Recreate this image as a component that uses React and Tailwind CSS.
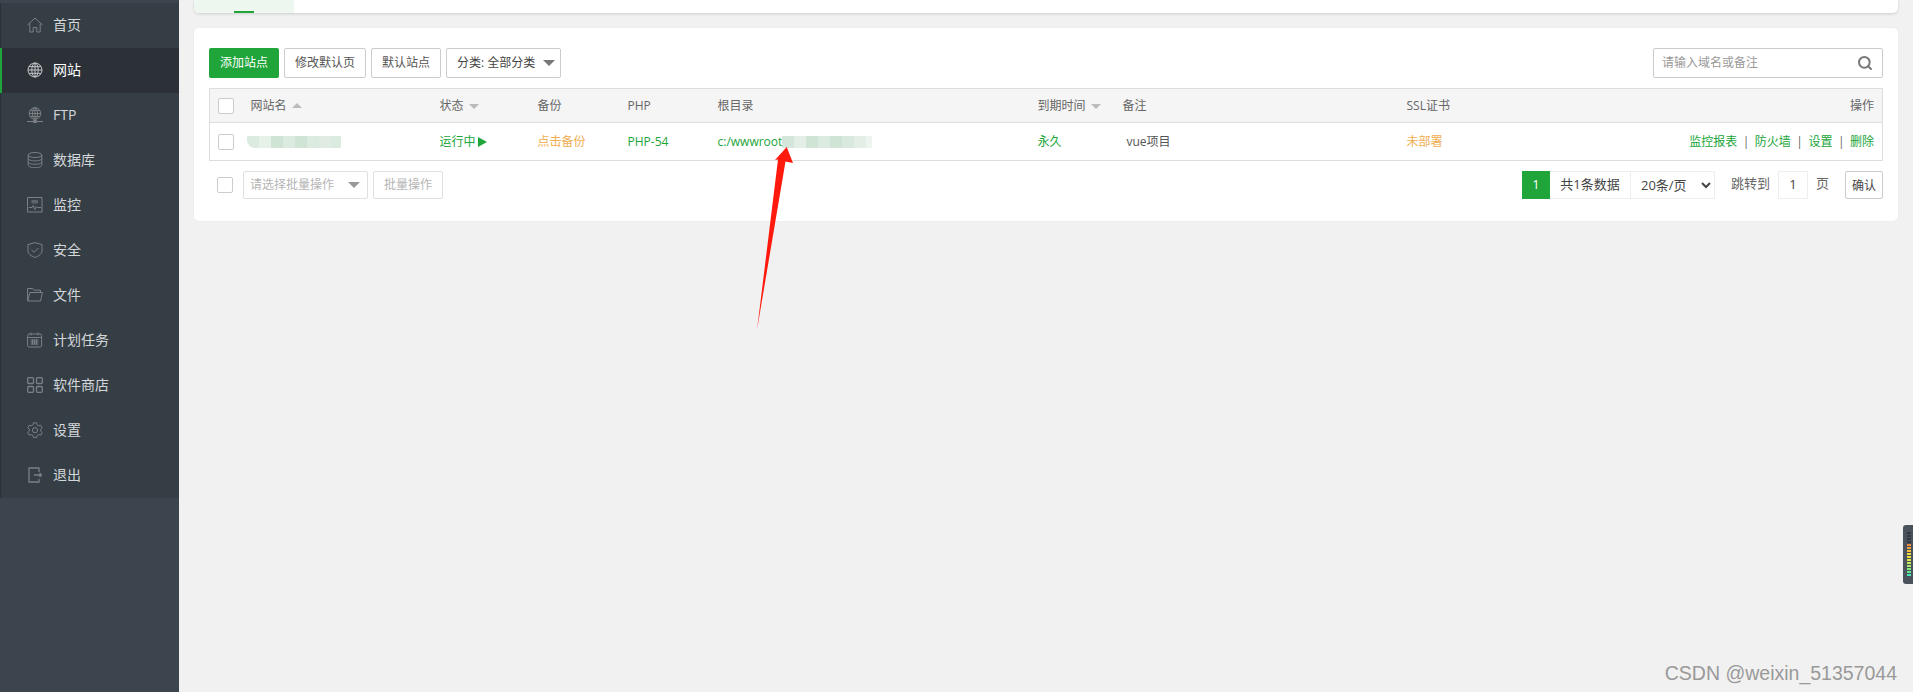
import { Search } from "lucide-react";

const icon = "w-4 h-4 shrink-0 fill-none stroke-[#7b8085]";

const navItems = [
  {
    label: "首页",
    icon: (
      <svg viewBox="0 0 16 16" className={icon}>
        <path d="M.5 8 8 1l7.5 7M2.8 6.5v8.5h3.4v-4.5h3.6V15h3.4V6.5" />
      </svg>
    ),
  },
  {
    label: "网站",
    active: true,
    icon: (
      <svg viewBox="0 0 16 16" className="w-4 h-4 shrink-0 fill-none stroke-[#c4c7ca]">
        <circle cx="8" cy="8" r="7" />
        <ellipse cx="8" cy="8" rx="3.2" ry="7" />
        <path d="M8 1v14M1 8h14M2 4.7h12M2 11.3h12" />
      </svg>
    ),
  },
  {
    label: "FTP",
    icon: (
      <svg viewBox="0 0 16 16" className={icon}>
        <circle cx="8" cy="6.5" r="5.8" />
        <ellipse cx="8" cy="6.5" rx="2.6" ry="5.8" />
        <path d="M2.2 6.5h11.6M3 3.6h10M3 9.4h10M8 .7v13M0 14.5h16" />
        <path d="M6.5 13.5h3v2h-3z" fill="#7b8085" />
      </svg>
    ),
  },
  {
    label: "数据库",
    icon: (
      <svg viewBox="0 0 16 16" className={icon}>
        <ellipse cx="8" cy="3" rx="6.8" ry="2.5" />
        <path d="M1.2 3v10.2c0 1.4 3 2.5 6.8 2.5s6.8-1.1 6.8-2.5V3" />
        <path d="M1.2 6.4c0 1.4 3 2.5 6.8 2.5s6.8-1.1 6.8-2.5M1.2 9.8c0 1.4 3 2.5 6.8 2.5s6.8-1.1 6.8-2.5" />
      </svg>
    ),
  },
  {
    label: "监控",
    icon: (
      <svg viewBox="0 0 16 16" className={icon}>
        <path d="M.5.5H15V15H.5z" />
        <path d="M4.5 3H11v3.5H4.5z" fill="#5f656b" stroke="none" />
        <path d="M2 10.5h3l1.2-2 1.600 4 1.400-3 1 1H14" />
      </svg>
    ),
  },
  {
    label: "安全",
    icon: (
      <svg viewBox="0 0 16 16" className={icon}>
        <path d="M8 .6 1 2.6v6.2c0 3 3 5.300 7 6.700 4-1.400 7-3.700 7-6.700V2.600z" />
        <path d="m4.500 7.800 2.600 2.500 4.300-4.300" />
      </svg>
    ),
  },
  {
    label: "文件",
    icon: (
      <svg viewBox="0 0 16 16" className={icon}>
        <path d="M.6 14V1.500h5.200l1.400 1.700h6.300v2.300" />
        <path d="M.6 14 3 5.500h12.500L13.500 14z" />
      </svg>
    ),
  },
  {
    label: "计划任务",
    icon: (
      <svg viewBox="0 0 16 16" className={icon}>
        <rect x=".6" y="2" width="14" height="13" rx="1.5" />
        <path d="M.6 5.500h14M4 .5v3M11 .5v3M3.500 8h8M3.500 10h8M3.500 12h8M5.500 7.500v5M7.500 7.500v5M9.500 7.500v5" />
      </svg>
    ),
  },
  {
    label: "软件商店",
    icon: (
      <svg viewBox="0 0 16 16" className="w-4 h-4 shrink-0 fill-none stroke-[#7b8085] stroke-[1.3]">
        <rect x=".7" y=".7" width="5.8" height="5.8" rx="1" />
        <rect x="9.5" y=".7" width="5.8" height="5.8" rx="1" />
        <rect x=".7" y="9.5" width="5.8" height="5.8" rx="1" />
        <rect x="9.5" y="9.5" width="5.8" height="5.8" rx="1" />
      </svg>
    ),
  },
  {
    label: "设置",
    icon: (
      <svg viewBox="0 0 16 16" className={icon}>
        <path d="M6.500.8h3l.5 2 1.700 1 2-.6 1.500 2.600-1.500 1.400v2l1.500 1.400-1.500 2.600-2-.6-1.700 1-.5 2h-3l-.5-2-1.700-1-2 .6L.8 10.600l1.500-1.400v-2L.8 5.800l1.500-2.600 2 .6 1.700-1z" />
        <circle cx="8" cy="8.2" r="2.6" />
      </svg>
    ),
  },
  {
    label: "退出",
    icon: (
      <svg viewBox="0 0 16 16" className="w-4 h-4 shrink-0 fill-none stroke-[#7b8085] stroke-[1.3]">
        <path d="M12 5V1H2v14h10v-3" />
        <path d="M7 8h7.500M12.500 6l2 2-2 2" />
      </svg>
    ),
  },
];

const columns = [
  { label: "网站名", width: "w-[189px]", sort: "up" },
  { label: "状态", width: "w-[98px]", sort: "down" },
  { label: "备份", width: "w-[90px]" },
  { label: "PHP", width: "w-[90px]" },
  { label: "根目录", width: "w-[320px]" },
  { label: "到期时间", width: "w-[85px]", sort: "down" },
  { label: "备注", width: "w-[284px]" },
  { label: "SSL证书", width: "w-[200px]" },
];

const nameBlur = ["#dcebdf", "#e6f1e8", "#cfe4d5", "#dcebdf", "#cfe4d5", "#dcebdf", "#e0ece3", "#dcebdf"];
const pathBlur = ["#d3e6d9", "#e3efe6", "#d0e4d6", "#dcebdf", "#cfe4d5", "#d9e9dd", "#e3efe6", "#eef5f0"];

const ledColors = ["#333a42", "#333a42", "#333a42", "#333a42", "#f08a3c", "#f0a03c", "#f0c03c", "#eed83c", "#e8e03c", "#e0e84c", "#c8e85c", "#a8e86c", "#88e87c", "#68e88c", "#48e8b4"];

function Checkbox() {
  return <span className="block w-4 h-4 rounded-[2px] border border-[#ccc] bg-white" />;
}

function SortUp() {
  return <span className="inline-block ml-[5px] align-[2px] w-0 h-0 border-x-[5px] border-x-transparent border-b-[5px] border-b-[#bbb]" />;
}

function SortDown() {
  return <span className="inline-block ml-[5px] align-[1px] w-0 h-0 border-x-[5px] border-x-transparent border-t-[5px] border-t-[#bbb]" />;
}

function SelectCaret({ className }) {
  return <span className={`inline-block w-0 h-0 border-x-[6px] border-x-transparent border-t-[6px] ${className}`} />;
}

function Blur({ blocks, className }) {
  return (
    <span className={`inline-flex h-3 align-middle overflow-hidden ${className}`}>
      {blocks.map((c, i) => (
        <span key={i} className="w-3 h-3 shrink-0" style={{ backgroundColor: c }} />
      ))}
    </span>
  );
}

function Sidebar() {
  return (
    <aside className="w-[179px] shrink-0 bg-[#3c444d] pt-[3px]">
      <nav className="border-l border-[#2c3138]">
        {navItems.map((item) => (
          <div
            key={item.label}
            className={
              item.active
                ? "h-[45px] pb-[2px] flex items-center pl-[26px] gap-[10px] bg-[#2c3138] text-white relative"
                : "h-[45px] pb-[2px] flex items-center pl-[26px] gap-[10px] bg-[#363e45] text-[#d3d7da]"
            }
          >
            {item.active && <span className="absolute -left-px top-0 bottom-0 w-[2px] bg-[#20a53a]" />}
            {item.icon}
            <span className="text-sm">{item.label}</span>
          </div>
        ))}
      </nav>
    </aside>
  );
}

function Toolbar() {
  const plain = "h-[30px] px-[10px] rounded-[2px] border border-[#ccc] bg-white text-[#555] flex items-center";
  return (
    <div className="flex items-center justify-between h-[30px] mb-[10px]">
      <div className="flex gap-[5px]">
        <button className="h-[30px] w-[70px] rounded-[2px] bg-[#20a53a] text-white">添加站点</button>
        <button className={plain}>修改默认页</button>
        <button className={plain}>默认站点</button>
        <div className="h-[30px] w-[115px] pl-[10px] pr-[5px] rounded-[2px] border border-[#ccc] bg-white text-[#444] flex items-center justify-between">
          分类: 全部分类
          <SelectCaret className="border-t-[#777]" />
        </div>
      </div>
      <div className="w-[230px] h-[30px] rounded-[2px] border border-[#ccc] bg-white flex items-center justify-between pl-[8px] pr-[9px]">
        <span className="text-[#999]">请输入域名或备注</span>
        <Search size={16} strokeWidth={3} className="text-[#777]" />
      </div>
    </div>
  );
}

function SitesTable() {
  return (
    <table className="w-full table-fixed border border-[#ddd] border-collapse">
      <thead>
        <tr className="h-[34px] bg-[#f5f5f5] text-[#666] border-b border-[#ddd]">
          <th className="w-[32px] pl-[8px] font-normal">
            <Checkbox />
          </th>
          {columns.map((col) => (
            <th key={col.label} className={`${col.width} px-[9px] text-left font-normal`}>
              {col.label}
              {col.sort === "up" && <SortUp />}
              {col.sort === "down" && <SortDown />}
            </th>
          ))}
          <th className="pl-[9px] pr-[8px] text-right font-normal">操作</th>
        </tr>
      </thead>
      <tbody>
        <tr className="h-[38px] text-[#20a53a]">
          <td className="pl-[8px]">
            <Checkbox />
          </td>
          <td className="pl-[5px]">
            <Blur blocks={nameBlur} className="w-[94px] rounded-bl-[8px]" />
          </td>
          <td className="px-[9px]">
            运行中
            <span className="inline-block align-[-1px] ml-[2px] w-0 h-0 border-y-[5px] border-y-transparent border-l-[9px] border-l-[#20a53a]" />
          </td>
          <td className="px-[9px] text-[#f0ad4e]">点击备份</td>
          <td className="px-[9px]">PHP-54</td>
          <td className="px-[9px] whitespace-nowrap">
            c:/wwwroot
            <Blur blocks={pathBlur} className="w-[90px]" />
          </td>
          <td className="px-[9px]">永久</td>
          <td className="px-[13px] text-[#555]">vue项目</td>
          <td className="px-[9px] text-[#f0ad4e]">未部署</td>
          <td className="pl-[9px] pr-[8px] text-right whitespace-nowrap">
            监控报表<span className="mx-[5.5px] text-[#666]">|</span>防火墙
            <span className="mx-[5.5px] text-[#666]">|</span>设置
            <span className="mx-[5.5px] text-[#666]">|</span>删除
          </td>
        </tr>
      </tbody>
    </table>
  );
}

function Footer() {
  return (
    <div className="flex items-center justify-between h-[28px] mt-[10px]">
      <div className="flex items-center pl-[8px]">
        <Checkbox />
        <div className="ml-[10px] w-[125px] h-[28px] pl-[6px] pr-[7px] rounded-[2px] border border-[#e0e0e0] text-[#b5b5b5] flex items-center justify-between">
          请选择批量操作
          <SelectCaret className="border-t-[#999]" />
        </div>
        <button className="ml-[5px] w-[70px] h-[28px] rounded-[2px] border border-[#e0e0e0] text-[#b5b5b5]">批量操作</button>
      </div>
      <div className="flex items-center text-[#444] text-[13px]">
        <span className="w-[28px] h-[28px] bg-[#20a53a] text-white flex items-center justify-center">1</span>
        <span className="w-[81px] h-[28px] border-y border-r border-[#eee] flex items-center justify-center">共1条数据</span>
        <select className="w-[84px] h-[28px] pl-[6px] border-y border-r border-[#eee] bg-white">
          <option>20条/页</option>
        </select>
        <span className="ml-[16px] text-[#666] -mt-[2px]">跳转到</span>
        <span className="ml-[8px] w-[30px] h-[28px] border border-[#eee] flex items-center justify-center">1</span>
        <span className="ml-[8px] text-[#666] -mt-[2px]">页</span>
        <button className="ml-[16px] w-[38px] h-[28px] rounded-[2px] border border-[#ccc] bg-white text-[#444] text-xs pt-[2px]">确认</button>
      </div>
    </div>
  );
}

export default function App() {
  return (
    <div className="relative h-[692px] overflow-hidden bg-[#f1f1f1] flex text-xs font-['Open_Sans','Noto_Sans_CJK_SC',sans-serif]">
      <Sidebar />
      <main className="flex-1 px-[15px]">
        <div className="h-[13px] bg-white rounded-b-[5px] shadow-[0_1px_3px_rgba(0,0,0,0.15)] overflow-hidden">
          <div className="relative w-[100px] h-[13px] bg-[#edf7ef]">
            <span className="absolute left-[40px] bottom-0 w-[20px] h-[2px] bg-[#20a53a]" />
          </div>
        </div>
        <section className="mt-[15px] bg-white rounded-[5px] px-[15px] pt-[20px] pb-[22px] shadow-[0_0_2px_rgba(0,0,0,0.05)]">
          <Toolbar />
          <SitesTable />
          <Footer />
        </section>
      </main>

      {/* annotation arrow */}
      <svg className="absolute left-[750px] top-[140px] w-[50px] h-[195px]" viewBox="750 140 50 195">
        <path d="M786.7 147 793 163 785.5 161.500 757 330 778 159.500 775 160z" fill="#ff1a0d" />
      </svg>

      {/* side widget */}
      <div className="absolute right-0 top-[525px] w-[10px] h-[59px] rounded-l-[3px] bg-[#4a525c] flex flex-col gap-[1px] pl-[4px] pt-[7px]">
        {ledColors.map((c, i) => (
          <span key={i} className="block w-[4px] h-[2px]" style={{ backgroundColor: c }} />
        ))}
      </div>

      {/* watermark */}
      <span className="absolute right-[16px] top-[661px] text-[19.5px] leading-6 text-[#999] font-['Liberation_Sans',sans-serif]">
        CSDN @weixin_51357044
      </span>
    </div>
  );
}
